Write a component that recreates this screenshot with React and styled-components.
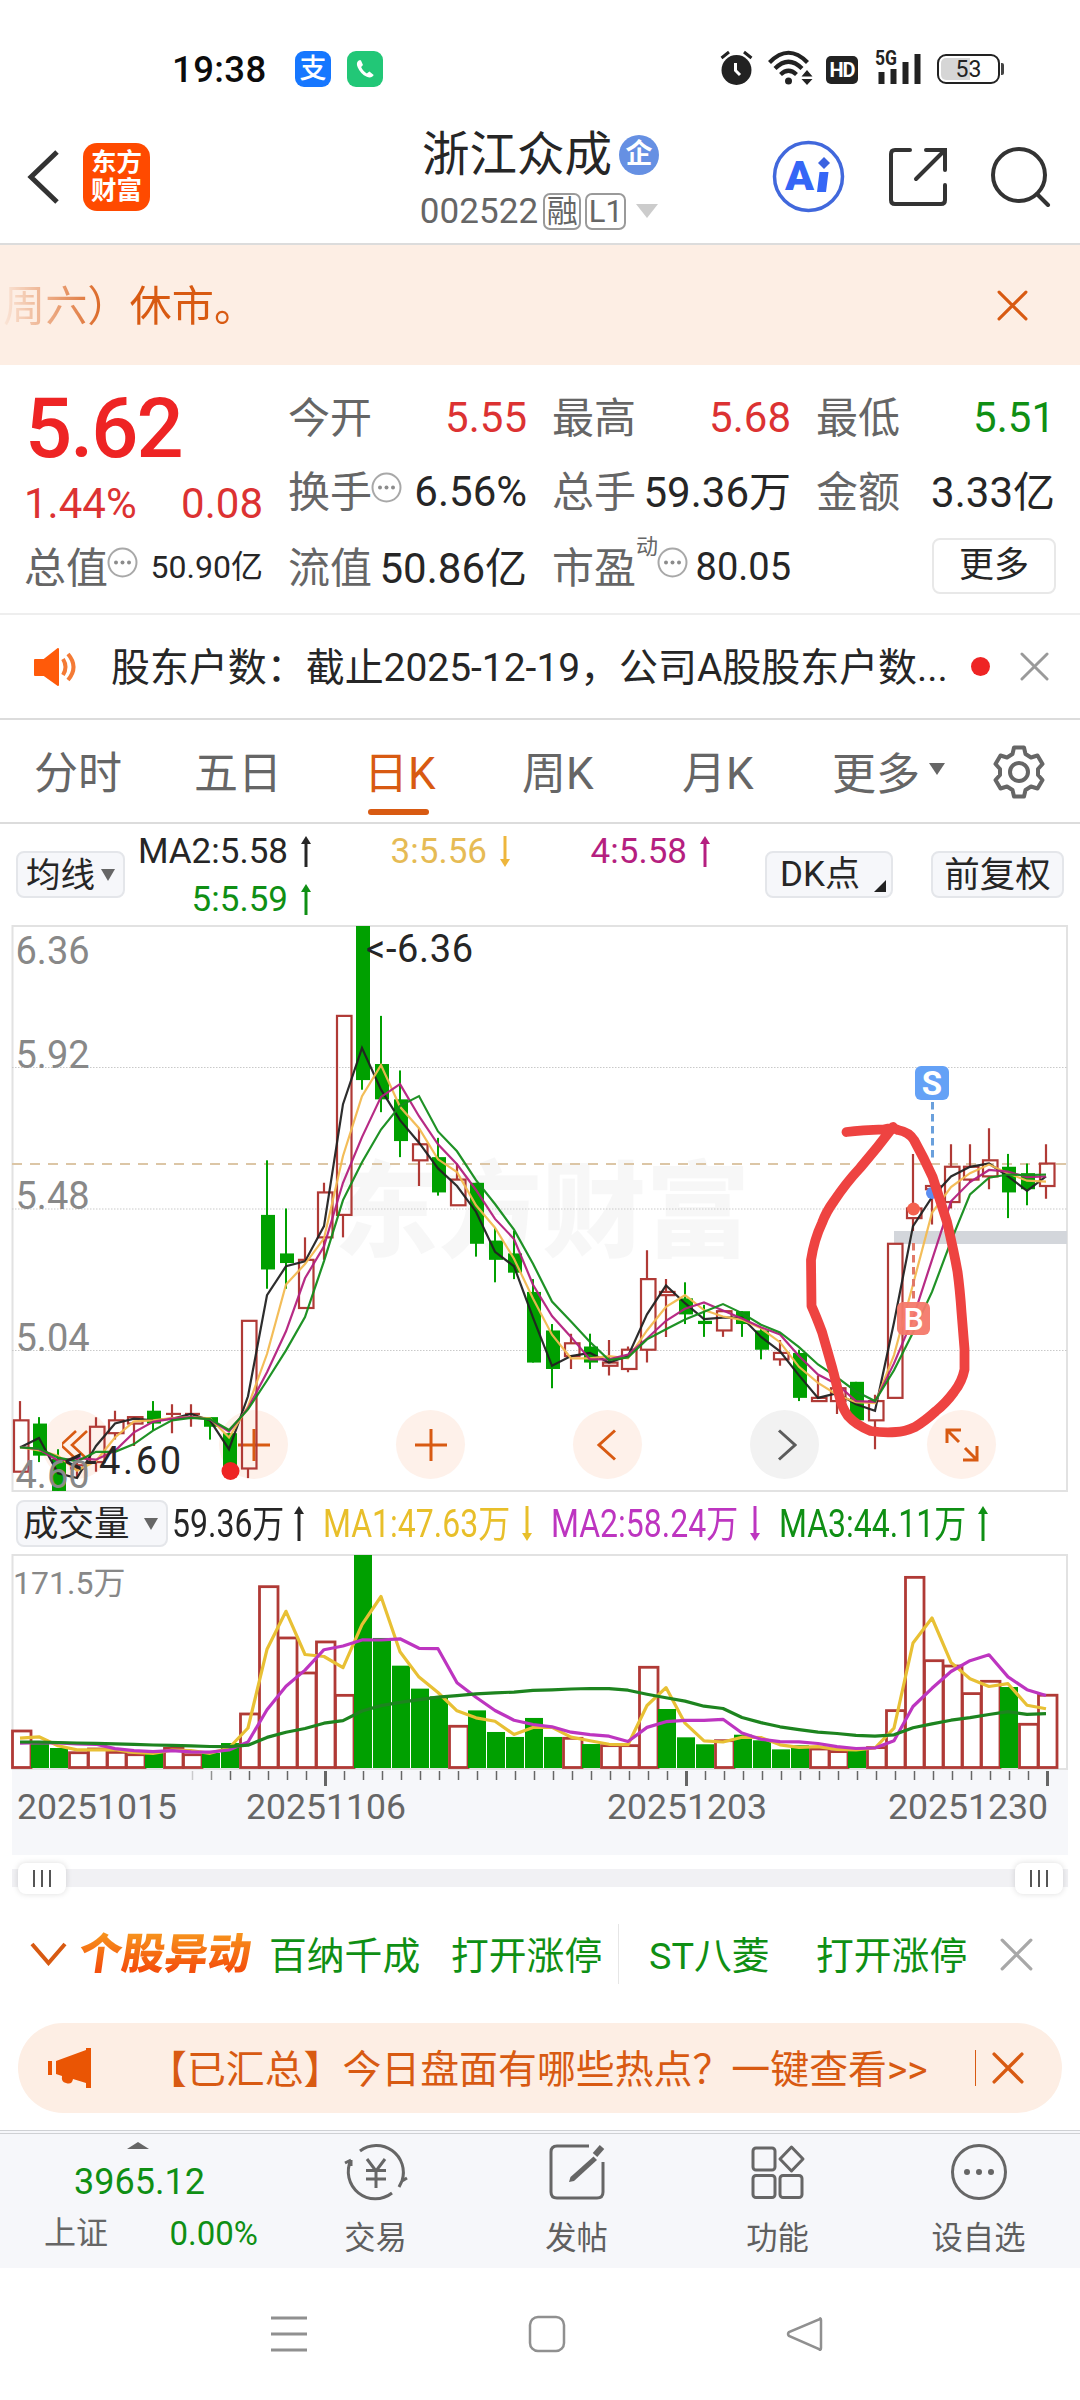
import React from "react";
import styled, { createGlobalStyle } from "styled-components";

const C = {
  ink: "#262626",
  grey: "#666666",
  soft: "#888888",
  red: "#ee2424",
  redText: "#dc3232",
  green: "#0f8f14",
  candleGreen: "#00a000",
  candleRed: "#b03a36",
  orange: "#d85a12",
  peach: "#fdeee4",
  panel: "#f6f7fa",
  line: "#dcdcdc",
};

const sans = '"Roboto", "Noto Sans CJK SC", sans-serif';

const Global = createGlobalStyle`
  * { box-sizing: border-box; }
  html, body { margin: 0; padding: 0; background: #fff; }
  body { font-family: ${sans}; color: ${C.ink}; width: 1080px; }
  svg { display: block; flex: none; }
`;

const Screen = styled.div`
  width: 1080px;
  height: 2400px;
  background: #fff;
  overflow: hidden;
  display: flex;
  flex-direction: column;
`;

/* ---------- status bar ---------- */
const StatusBar = styled.div`
  height: 110px;
  padding: 28px 76px 0 172px;
  display: flex;
  align-items: flex-start;
`;
const Clock = styled.div`
  width: 123px;
  line-height: 84px;
  height: 84px;
  font-size: 36.5px;
  font-weight: 500;
  letter-spacing: 0.4px;
  color: #0c0c0c;
`;
const AppBadge = styled.div`
  width: 36px;
  height: 36px;
  margin: 23px 16px 0 0;
  border-radius: 9px;
  background: ${(p) => p.$bg};
  color: #fff;
  font-size: 27px;
  font-weight: 500;
  line-height: 36px;
  display: flex;
  align-items: center;
  justify-content: center;
`;
const StatusIcons = styled.div`
  margin-left: auto;
  height: 36px;
  margin-top: 22px;
  display: flex;
  align-items: center;
`;
const HdBadge = styled.div`
  width: 32px;
  height: 28px;
  margin: 3px 16px 0 13px;
  border-radius: 5px;
  background: #222;
  color: #fff;
  font-size: 20px;
  font-weight: 700;
  line-height: 29px;
  text-align: center;
  letter-spacing: -1px;
`;
const Battery = styled.div`
  width: 63px;
  height: 30px;
  margin: 2px 1px 0 15px;
  border: 2px solid #222;
  border-radius: 9px;
  padding: 2px;
  display: flex;
`;
const BatteryFill = styled.div`
  width: 55px;
  border-radius: 5px;
  background: linear-gradient(90deg, #d6d6d6 53%, #fff 53%);
  font-size: 23px;
  line-height: 23px;
  text-align: center;
  color: #222;
`;
const BatteryNub = styled.div`
  width: 3px;
  height: 12px;
  margin-top: 2px;
  background: #444;
  border-radius: 0 2px 2px 0;
`;

/* ---------- header ---------- */
const Header = styled.header`
  height: 135px;
  border-bottom: 2px solid ${C.line};
  padding: 0 29px 0 27px;
  display: grid;
  grid-template-columns: 1fr auto 1fr;
`;
const HeaderLeft = styled.div`
  display: flex;
  align-items: center;
  gap: 23px;
`;
const BrandLogo = styled.div`
  width: 67px;
  height: 68px;
  border-radius: 14px;
  background: #ff4a00;
  color: #fff;
  font-size: 25.5px;
  font-weight: 700;
  line-height: 28px;
  padding-top: 5px;
  text-align: center;
`;
const TitleBlock = styled.div`
  padding-top: 17px;
  display: flex;
  flex-direction: column;
  align-items: center;
`;
const TitleLine = styled.div`
  display: flex;
  align-items: center;
  height: 56px;
  margin-left: 3px;
  font-size: 47.5px;
  line-height: 56px;
  gap: 7px;
`;
const VerifiedBadge = styled.span`
  width: 40px;
  height: 40px;
  border-radius: 50%;
  background: #6690e3;
  color: #fff;
  font-size: 27px;
  font-weight: 700;
  line-height: 38px;
  text-align: center;
`;
const CodeLine = styled.div`
  display: flex;
  align-items: center;
  height: 40px;
  margin-top: 8px;
  font-size: 35px;
  letter-spacing: 0.1px;
  color: ${C.grey};
`;
const Tag = styled.span`
  height: 37px;
  width: ${(p) => p.$w}px;
  margin-left: ${(p) => p.$gap}px;
  border: 2px solid #9a9a9a;
  border-radius: 7px;
  font-size: 31px;
  line-height: 33px;
  text-align: center;
`;
const Caret = styled.span`
  width: 0;
  height: 0;
  flex: none;
  margin: ${(p) => p.$margin || 0};
  border-left: ${(p) => p.$w / 2}px solid transparent;
  border-right: ${(p) => p.$w / 2}px solid transparent;
  border-${(p) => (p.$up ? "bottom" : "top")}: ${(p) => p.$h}px solid ${(p) => p.$color};
`;
const HeaderRight = styled.div`
  display: flex;
  justify-content: flex-end;
  align-items: center;
  gap: 44px;
`;

/* ---------- notice ---------- */
const Notice = styled.div`
  height: 120px;
  background: ${C.peach};
  color: ${C.orange};
  padding: 0 52px 0 3px;
  display: flex;
  align-items: center;
  justify-content: space-between;
  font-size: 42.2px;
`;
const FadingText = styled.span`
  margin-top: -6px;
  background: linear-gradient(90deg, rgba(216, 90, 18, 0.05) 0, ${C.orange} 110px);
  -webkit-background-clip: text;
  background-clip: text;
  color: transparent;
`;

/* ---------- quote ---------- */
const QuoteGrid = styled.section`
  height: 250px;
  padding: 15px 25px 0 24px;
  border-bottom: 2px solid #eeeeee;
  display: grid;
  grid-template-columns: repeat(4, 1fr);
  grid-template-rows: 74px 74px 77px;
  column-gap: 25px;
`;
const PriceCell = styled.div`
  grid-row: span 2;
  color: ${C.red};
`;
const LastPrice = styled.div`
  font-size: 83px;
  font-weight: 500;
  line-height: 98px;
  letter-spacing: -2px;
  padding-left: 1px;
`;
const ChangeLine = styled.div`
  display: flex;
  justify-content: space-between;
  font-size: 42px;
  line-height: 52px;
  color: ${C.redText};
`;
const QuoteCell = styled.div`
  display: flex;
  align-items: center;
  justify-content: space-between;
  font-size: 42px;
  white-space: nowrap;
  color: ${(p) => p.$color || C.ink};
`;
const QuoteLabel = styled.span`
  color: ${C.grey};
  display: flex;
  align-items: center;
  margin-top: -5px;
`;
const QuoteValue = styled.span`
  font-size: ${(p) => p.$size || 42}px;
  margin-top: ${(p) => (p.$raise ? -5 : 0)}px;
`;
const Superscript = styled.sup`
  font-size: 22px;
  line-height: 26px;
  align-self: flex-start;
`;
const MoreButton = styled.button`
  width: 124px;
  height: 56px;
  margin: -2px -1px 0 auto;
  padding: 0;
  background: #fff;
  border: 2px solid #e8e8e8;
  border-radius: 8px;
  font: 35px/50px ${sans};
  color: ${C.ink};
`;

/* ---------- news ---------- */
const NewsRow = styled.div`
  height: 105px;
  border-bottom: 2px solid ${C.line};
  padding: 0 31px 0 33px;
  display: flex;
  align-items: center;
  font-size: 38.95px;
`;
const NewsText = styled.div`
  margin: -5px 0 0 30px;
  flex: 1;
  white-space: nowrap;
`;
const RedDot = styled.span`
  width: 19px;
  height: 19px;
  border-radius: 50%;
  background: ${C.red};
  margin-right: 30px;
`;

/* ---------- tabs ---------- */
const Tabs = styled.nav`
  height: 104px;
  border-bottom: 2px solid ${C.line};
  padding: 0 34px 0 34px;
  display: flex;
  align-items: stretch;
  font-size: 44px;
  color: ${C.grey};
`;
const Tab = styled.div`
  width: ${(p) => p.$w}px;
  display: flex;
  flex-direction: column;
  line-height: 108px;
  text-indent: ${(p) => (p.$on ? -4 : 0)}px;
  color: ${(p) => (p.$on ? C.orange : C.grey)};
`;
const TabLine = styled.span`
  width: 61px;
  height: 6px;
  margin-top: -19px;
  border-radius: 3px;
  background: ${C.orange};
`;
const MoreTab = styled.div`
  display: flex;
  align-items: center;
  flex: 1;
`;

/* ---------- indicator row ---------- */
const IndicatorRow = styled.div`
  height: 101px;
  padding: 0 16px 0 16px;
  display: flex;
  align-items: center;
`;
const ChipButton = styled.button`
  width: ${(p) => p.$w}px;
  height: ${(p) => p.$h || 47}px;
  margin: 0 ${(p) => p.$mr || 0}px 0 0;
  padding: 0 ${(p) => p.$px || 0}px;
  flex: none;
  background: ${C.panel};
  border: 2px solid #e4e6ea;
  border-radius: 8px;
  display: flex;
  align-items: center;
  justify-content: ${(p) => (p.$center ? "center" : "space-between")};
  font: ${(p) => p.$size || 35}px/42px ${sans};
  color: ${C.ink};
`;
const MaGrid = styled.div`
  margin-left: 14px;
  flex: 1;
  display: grid;
  grid-template-columns: 174px 199px 200px;
  grid-auto-rows: 48px;
  margin-top: 1px;
`;
const MaItem = styled.div`
  display: flex;
  align-items: center;
  justify-content: flex-end;
  gap: 11px;
  font-size: 35px;
  white-space: nowrap;
  color: ${(p) => p.$color};
`;

/* ---------- charts ---------- */
const ChartArea = styled.div`
  position: relative;
  height: 568px;
`;
const ChartButtons = styled.div`
  position: absolute;
  left: 42px;
  top: 485px;
  display: flex;
  gap: 108px;
`;
const RoundButton = styled.div`
  width: 69px;
  height: 69px;
  border-radius: 50%;
  background: ${(p) => (p.$muted ? "#f2f2f2" : "#fef1ea")};
  display: flex;
  align-items: center;
  justify-content: center;
`;
const ChartLayer = styled.svg`
  position: relative;
`;
const VolumeHeader = styled.div`
  height: 61px;
  padding: 0 0 0 16px;
  display: flex;
  align-items: center;
`;
const VolumeItem = styled.div`
  width: ${(p) => p.$w}px;
  margin-left: ${(p) => p.$gap}px;
  display: flex;
  align-items: center;
  justify-content: space-between;
  color: ${(p) => p.$color};
`;
const Narrow = styled.span`
  width: ${(p) => p.$w}px;
  font-size: 38px;
  line-height: 50px;
  white-space: nowrap;
  transform: scaleX(0.842);
  transform-origin: 0 50%;
`;
const RangeBar = styled.div`
  height: 46px;
  margin: 0 12px;
  padding: 0 5px 0 6px;
  display: flex;
  align-items: center;
  justify-content: space-between;
  background: linear-gradient(#f1f1f4, #f1f1f4) 0 50% / 100% 18px no-repeat;
`;
const RangeHandle = styled.div`
  width: 48px;
  height: 31px;
  border-radius: 8px;
  background: #fff;
  box-shadow: 0 0 6px rgba(0, 0, 0, 0.14);
  display: flex;
  align-items: center;
  justify-content: center;
  gap: 6px;
`;
const Grip = styled.span`
  width: 2px;
  height: 17px;
  background: #555;
`;

/* ---------- movers ---------- */
const MoversRow = styled.div`
  height: 60px;
  margin-top: 23px;
  padding: 0 46px 0 30px;
  display: flex;
  align-items: center;
  font-size: 37.8px;
  color: ${C.green};
  white-space: nowrap;
`;
const MoversTitle = styled.span`
  width: 178px;
  margin: 0 12px 0 12px;
  font-size: 43px;
  font-weight: 900;
  line-height: 60px;
  transform: skewX(-8deg);
  background: linear-gradient(#f7941d 15%, #f4500c 75%);
  -webkit-background-clip: text;
  background-clip: text;
  color: transparent;
`;
const Mover = styled.span`
  width: ${(p) => p.$w}px;
  margin-top: -3px;
  flex: none;
`;
const MoverDivider = styled.span`
  width: 1px;
  height: 60px;
  margin-right: 30px;
  background: #e6e6e6;
`;

const HotPill = styled.div`
  height: 90px;
  margin: 39px 18px 0;
  padding: 0 38px 0 28px;
  border-radius: 45px;
  background: ${C.peach};
  color: ${C.orange};
  display: flex;
  align-items: center;
  font-size: 38.9px;
`;
const PillText = styled.div`
  margin: -5px 0 0 54px;
  flex: 1;
  white-space: nowrap;
`;
const PillDivider = styled.span`
  width: 1px;
  height: 36px;
  margin-right: 16px;
  background: ${C.orange};
`;

/* ---------- bottom ---------- */
const BottomBar = styled.div`
  height: 138px;
  margin-top: 17px;
  border-top: 4px double #cfd1d4;
  background: ${C.panel};
  display: flex;
`;
const IndexCell = styled.div`
  width: 276px;
  padding: 8px 18px 0 44px;
  display: flex;
  flex-direction: column;
  color: ${C.green};
`;
const IndexValue = styled.div`
  margin: 10px 0 0 30px;
  font-size: 36px;
  line-height: 46px;
`;
const IndexLine = styled.div`
  display: flex;
  justify-content: space-between;
  align-items: center;
  line-height: 44px;
  margin-top: 7px;
  font-size: 33px;
`;
const IndexName = styled.span`
  margin-top: -2px;
  font-size: 32px;
  color: ${C.grey};
`;
const NavItem = styled.div`
  width: 201px;
  padding-top: 8px;
  display: flex;
  flex-direction: column;
  align-items: center;
  font-size: 31.3px;
  line-height: 44px;
  gap: 15px;
  margin-left: -1px;
  margin-right: 1px;
  color: #5f5f5f;
`;
const SystemNav = styled.div`
  flex: 1;
  padding: 47px 257px 0 270px;
  display: flex;
  align-items: flex-start;
  justify-content: space-between;
`;

/* ---------- icons ---------- */
const Cross = ({ size = 30, color, w = 3 }) => (
  <svg width={size} height={size} viewBox="0 0 30 30" stroke={color} strokeWidth={w} strokeLinecap="round">
    <path d="M2 2L28 28M28 2L2 28" />
  </svg>
);
const ArrowIcon = styled.svg`
  transform: ${(p) => (p.$down ? "scaleY(-1)" : "none")};
`;
const Arrow = ({ down, color, h = 31 }) => (
  <ArrowIcon $down={down} width="14" height={h} viewBox={`0 0 14 ${h}`}>
    <path d={`M7 5V${h}`} stroke={color} strokeWidth="3" />
    <path d="M7 0L12 8H2Z" fill={color} />
  </ArrowIcon>
);
const InfoIcon = styled.svg`
  margin: -3px 0 0 -1px;
`;
const Info = () => (
  <InfoIcon width="31" height="31" viewBox="0 0 31 31">
    <circle cx="15.5" cy="15.5" r="14" fill="none" stroke="#a8a8a8" strokeWidth="2" />
    <g fill="#8c8c8c">
      <circle cx="9" cy="15.5" r="2" />
      <circle cx="15.5" cy="15.5" r="2" />
      <circle cx="22" cy="15.5" r="2" />
    </g>
  </InfoIcon>
);
const WifiIcon = styled.svg`
  margin-left: 15px;
`;
const DkLabel = styled.span`
  margin-left: 8px;
`;
const CornerMark = styled.svg`
  margin-top: 22px;
`;

/* ---------- data ---------- */
// open, close, high, low, volume (in 万)
const DAYS = [
  [4.66, 4.82, 4.88, 4.66, 30.6], [4.81, 4.71, 4.83, 4.69, 19.6], [4.70, 4.60, 4.73, 4.60, 16.1],
  [4.67, 4.68, 4.71, 4.64, 13.1], [4.69, 4.80, 4.83, 4.66, 16.1], [4.78, 4.82, 4.85, 4.76, 13.4],
  [4.81, 4.83, 4.83, 4.74, 11.5], [4.85, 4.81, 4.88, 4.79, 12.1], [4.84, 4.84, 4.87, 4.78, 16.6],
  [4.84, 4.84, 4.87, 4.80, 11.5], [4.83, 4.80, 4.83, 4.76, 12.1], [4.78, 4.66, 4.78, 4.65, 20.1],
  [4.67, 5.13, 5.13, 4.64, 44.3], [5.46, 5.29, 5.63, 5.23, 146.8], [5.34, 5.31, 5.48, 5.23, 105.5],
  [5.17, 5.32, 5.39, 5.17, 77.3], [5.39, 5.53, 5.56, 5.32, 102.3], [5.46, 6.08, 6.08, 5.39, 59.3],
  [6.36, 5.88, 6.36, 5.85, 171.5], [5.93, 5.82, 6.08, 5.78, 104.7], [5.82, 5.69, 5.91, 5.64, 82.4],
  [5.63, 5.68, 5.73, 5.55, 63.9], [5.64, 5.53, 5.70, 5.52, 57.7], [5.49, 5.57, 5.62, 5.49, 34.4],
  [5.56, 5.37, 5.56, 5.33, 46.4], [5.38, 5.32, 5.42, 5.25, 29.0], [5.34, 5.28, 5.41, 5.26, 25.0],
  [5.22, 5.00, 5.26, 5.00, 40.3], [5.10, 4.98, 5.12, 4.92, 25.0], [5.02, 5.06, 5.09, 4.98, 24.7],
  [5.05, 5.00, 5.09, 4.98, 19.3], [4.99, 5.00, 5.07, 4.96, 18.8], [4.98, 5.04, 5.05, 4.97, 18.8],
  [5.04, 5.26, 5.35, 5.00, 81.9], [5.21, 5.22, 5.26, 5.08, 47.5], [5.20, 5.15, 5.25, 5.12, 24.7],
  [5.13, 5.12, 5.18, 5.08, 19.1], [5.10, 5.16, 5.16, 5.08, 22.8], [5.16, 5.12, 5.16, 5.08, 26.8],
  [5.10, 5.04, 5.11, 5.01, 22.3], [5.01, 5.03, 5.07, 4.99, 15.0], [5.03, 4.89, 5.04, 4.88, 18.3],
  [4.88, 4.89, 4.96, 4.88, 16.1], [4.88, 4.92, 4.97, 4.84, 14.0], [4.94, 4.82, 4.94, 4.82, 15.0],
  [4.82, 4.88, 4.90, 4.73, 17.2], [4.89, 5.37, 5.37, 4.89, 47.0], [5.45, 5.48, 5.65, 5.41, 154.3],
  [5.54, 5.55, 5.55, 5.43, 87.2], [5.50, 5.61, 5.68, 5.48, 82.9], [5.57, 5.61, 5.68, 5.56, 60.7],
  [5.58, 5.63, 5.73, 5.54, 70.6], [5.61, 5.53, 5.65, 5.45, 65.2], [5.59, 5.54, 5.62, 5.49, 36.0],
  [5.55, 5.62, 5.68, 5.51, 59.4],
];
const PRIOR_CLOSES = [4.73, 4.74, 4.74, 4.65];
const PRIOR_VOLUMES = [...Array(15).fill(21.5), 17.4, 17.4, 17.4, 17.4, 17.4];

const px = (i) => 20 + 19 * i;
const py = (p) => 926 + (6.36 - p) * 321;
const vy = (v) => 1768 - v * 1.242;

const average = (series, prior, n) => {
  const all = [...prior, ...series];
  return series.map((_, i) => {
    const end = i + prior.length + 1;
    return all.slice(end - n, end).reduce((a, b) => a + b, 0) / n;
  });
};
const points = (values, y) => values.map((v, i) => `${px(i)},${y(v).toFixed(1)}`).join(" ");

const closes = DAYS.map((d) => d[1]);
const volumes = DAYS.map((d) => d[4]);

const Candle = ({ day, i }) => {
  const [open, close, high, low] = day;
  const x = px(i);
  const rising = close >= open;
  const top = py(Math.max(open, close));
  const bottom = py(Math.min(open, close));
  if (rising) {
    return (
      <g stroke={C.candleRed} strokeWidth="2.2" fill="none">
        <path d={`M${x} ${py(high)}V${top}M${x} ${bottom}V${py(low)}`} />
        {bottom - top < 1 ? (
          <path d={`M${x - 6} ${top}H${x + 9}`} />
        ) : (
          <rect x={x - 6} y={top} width="14.5" height={bottom - top} />
        )}
      </g>
    );
  }
  return (
    <g fill={C.candleGreen}>
      <rect x={x - 1} y={py(high)} width="2" height={py(low) - py(high)} />
      <rect x={x - 6} y={top} width="14" height={Math.max(bottom - top, 3)} />
    </g>
  );
};

const MA_LINES = [
  [2, "#222222"],
  [3, "#f2b950"],
  [4, "#b3207e"],
  [5, "#138c1a"],
];

const PriceChart = () => (
  <ChartLayer width="1080" height="568" viewBox="0 925 1080 568" fontFamily={sans}>
    <text x="334" y="1249" fontSize="104" fontWeight="900" fill="#000" opacity="0.028">东方财富</text>
    <path d="M12.5 926H1067V1491H12.5Z" fill="none" stroke="#e2e2e2" strokeWidth="2" />
    <path d="M12 1067.5H1067M12 1209H1067M12 1350.5H1067" stroke="#c9c9c9" strokeWidth="1" strokeDasharray="1.5 1.5" />
    <path d="M12 1164H1067" stroke="#dcc6a6" strokeWidth="1.8" strokeDasharray="10 8" />
    <rect x="894" y="1231" width="173" height="13" fill="#d3d6db" />
    {DAYS.map((day, i) => (
      <Candle key={i} day={day} i={i} />
    ))}
    {MA_LINES.map(([n, color]) => (
      <polyline
        key={n}
        points={points(average(closes, PRIOR_CLOSES, n), py)}
        fill="none"
        stroke={color}
        strokeWidth="2.2"
        strokeOpacity="0.95"
      />
    ))}
    <g fontSize="38" fill={C.ink}>
      <text x="366" y="962" textLength="107">&lt;-6.36</text>
      <text x="64" y="1474" textLength="117">&lt;-4.60</text>
    </g>
    <g fontSize="38" fill={C.soft}>
      <text x="15.5" y="964">6.36</text>
      <text x="15.5" y="1068">5.92</text>
      <text x="15.5" y="1209">5.48</text>
      <text x="15.5" y="1351">5.04</text>
      <text x="15.5" y="1488">4.60</text>
    </g>
    <circle cx="230.5" cy="1471" r="9" fill={C.red} />
    <g>
      <path d="M932.5 1102V1158" stroke="#6aa0dc" strokeWidth="3" strokeDasharray="7.5 4.5" />
      <circle cx="932" cy="1193" r="6" fill="#5b8df0" />
      <rect x="915" y="1066" width="34" height="34" rx="6" fill="#64a1f6" />
      <text x="932" y="1095" fontSize="33" fontWeight="700" fill="#fff" textAnchor="middle">S</text>
      <path d="M913.5 1243V1300" stroke="#e07868" strokeWidth="3" strokeDasharray="7.5 4.5" />
      <circle cx="913.5" cy="1209" r="6.5" fill="#f4614e" />
      <rect x="897" y="1302" width="33" height="33" rx="6" fill="#f4796a" opacity="0.95" />
      <text x="913.5" y="1330" fontSize="32" fontWeight="500" fill="#fff" textAnchor="middle">B</text>
    </g>
    <path
      d="M846.5 1132Q862 1130 884 1129.4Q893 1127 898 1130Q909 1132 914 1140Q924 1158 932.6 1177L947 1222Q954 1252 957.5 1271.5Q960 1290 961.5 1312L964.5 1349V1369.5Q962 1382 954 1392Q946 1403 936 1411Q925 1421 915 1427Q904 1432 896 1432Q884 1433 870.6 1431Q856 1425 848 1416Q842 1408 839 1395Q835 1378 832 1367L822 1332Q816 1316 811.5 1306L811 1260Q814 1240 822 1223Q826 1212 834 1201Q846 1183 860 1168Q878 1147 893 1127"
      fill="none"
      stroke="#ee4341"
      strokeWidth="9.8"
      strokeLinecap="round"
      strokeLinejoin="round"
    />
  </ChartLayer>
);

const VOLUME_LINES = [
  [2, "#e8c034"],
  [5, "#bd35c0"],
  [20, "#1d841f"],
];
const DATES = [
  [17, "20251015"],
  [246, "20251106"],
  [607, "20251203"],
  [888, "20251230"],
];

const VolumeChart = () => (
  <svg width="1080" height="301" viewBox="0 1554 1080 301" fontFamily={sans}>
    <rect x="12" y="1770" width="1056" height="85" fill={C.panel} />
    <path d="M12.5 1555H1067V1769H12.5Z" fill="none" stroke="#e2e2e2" strokeWidth="2" />
    <text x="13" y="1594" fontSize="32" fill={C.soft}>171.5万</text>
    {DAYS.map((day, i) => {
      const previous = i ? closes[i - 1] : 4.65;
      const top = vy(day[4]);
      return day[1] >= previous ? (
        <rect key={i} x={px(i) - 7.5} y={top + 1} width="18.5" height={1767.5 - top - 1} fill="#fff" stroke={C.candleRed} strokeWidth="2.8" />
      ) : (
        <rect key={i} x={px(i) - 8} y={top} width="18" height={1768 - top} fill={C.candleGreen} />
      );
    })}
    {VOLUME_LINES.map(([n, color]) => (
      <polyline
        key={n}
        points={points(average(volumes, PRIOR_VOLUMES, n), vy)}
        fill="none"
        stroke={color}
        strokeWidth="3.2"
        strokeLinejoin="round"
      />
    ))}
    {DAYS.map((_, i) => {
      if (i < 9) return null;
      const major = i === 16 || i === 35 || i === 54;
      return (
        <path
          key={i}
          d={`M${px(i) + 1.5} 1771V${major ? 1786 : 1780}`}
          stroke={C.grey}
          strokeWidth={major ? 3 : 1.5}
          opacity={i === 9 ? 0.3 : i === 10 ? 0.7 : 1}
        />
      );
    })}
    <g fontSize="35.6" fill={C.grey}>
      {DATES.map(([x, label]) => (
        <text key={label} x={x} y="1819">{label}</text>
      ))}
    </g>
  </svg>
);

const VOLUME_LEGEND = [
  { text: "59.36万", color: C.ink, w: 134, textW: 110, gap: 4 },
  { text: "MA1:47.63万", color: "#e8bf2a", w: 211, textW: 184, gap: 17, down: true },
  { text: "MA2:58.24万", color: "#bd35c0", w: 211, textW: 184, gap: 17, down: true },
  { text: "MA3:44.11万", color: C.green, w: 211, textW: 184, gap: 17 },
];

export default function App() {
  return (
    <>
      <Global />
      <Screen>
        <StatusBar>
          <Clock>19:38</Clock>
          <AppBadge $bg="#1677ff">支</AppBadge>
          <AppBadge $bg="#22c777">
            <svg width="22" height="22" viewBox="0 0 24 24">
              <path d="M5.5 2.5C3 4 2.500 6.500 4 10C6 14.800 9.500 18.500 14 20.500C17.500 22 20.200 21 21.500 18.500L16.800 14.800L14 16.800C11.500 15.500 9 12.600 7.800 9.800L9.800 7.500L7.500 2.500Z" fill="#fff" />
            </svg>
          </AppBadge>
          <StatusIcons>
            <svg width="33" height="36" viewBox="0 0 33 36">
              <circle cx="16.500" cy="20" r="15" fill="#222" />
              <path d="M1.500 8L9 2M31.500 8L24 2" stroke="#222" strokeWidth="3" />
              <path d="M15.500 13V20.500L20 25" stroke="#fff" strokeWidth="3" fill="none" />
            </svg>
            <WifiIcon width="45" height="36" viewBox="0 0 45 36">
              <g fill="none" stroke="#222" strokeWidth="4.200">
                <path d="M1.500 12.500Q20.500 -7 39.500 12.500" />
                <path d="M7 18.500Q20.500 5 34 18.500" />
                <path d="M12.500 24.500Q20.500 17 28.500 24.500" />
              </g>
              <circle cx="20.500" cy="31" r="3.500" fill="#222" />
              <path d="M39 20L44.500 26.500H33.500ZM39 35L33.500 29H44.500Z" fill="#222" />
            </WifiIcon>
            <HdBadge>HD</HdBadge>
            <svg width="48" height="46" viewBox="0 0 48 46">
              <text x="1" y="20" fontFamily="Roboto, sans-serif" fontSize="20" fontWeight="700" fill="#222" textLength="22" lengthAdjust="spacingAndGlyphs">5G</text>
              <path d="M7.500 27V39M19.500 24V39M31.500 17V39M43.500 9V39" stroke="#222" strokeWidth="6" />
            </svg>
            <Battery><BatteryFill>53</BatteryFill></Battery>
            <BatteryNub />
          </StatusIcons>
        </StatusBar>

        <Header>
          <HeaderLeft>
            <svg width="33" height="56" viewBox="0 0 33 56">
              <path d="M30 3L4 28L30 53" fill="none" stroke="#333" strokeWidth="5" />
            </svg>
            <BrandLogo>东方<br />财富</BrandLogo>
          </HeaderLeft>
          <TitleBlock>
            <TitleLine>浙江众成<VerifiedBadge>企</VerifiedBadge></TitleLine>
            <CodeLine>
              002522
              <Tag $w={38} $gap={5}>融</Tag>
              <Tag $w={41} $gap={4}>L1</Tag>
              <Caret $w={23} $h={14} $color="#cccccc" $margin="0 0 0 10px" />
            </CodeLine>
          </TitleBlock>
          <HeaderRight>
            <svg width="73" height="73" viewBox="0 0 73 73">
              <circle cx="36.500" cy="36.500" r="34" fill="#fff" stroke="#4168dc" strokeWidth="3.500" />
              <text x="13" y="50" fontFamily="Roboto, sans-serif" fontSize="41" fontWeight="900" fill="#3566f6" textLength="29" lengthAdjust="spacingAndGlyphs">A</text>
              <path d="M47.500 32H56.500L54 52H45Z" fill="#3566f6" />
              <path d="M52 17L58 23L52 29L46 23Z" fill="#3b62e0" />
            </svg>
            <svg width="58" height="58" viewBox="0 0 58 58" fill="none" stroke="#333" strokeWidth="4" strokeLinecap="round">
              <path d="M21 2H6Q2 2 2 6V52Q2 56 6 56H52Q56 56 56 52V37" />
              <path d="M37 2H56V22M55 3L27 31" />
            </svg>
            <svg width="60" height="60" viewBox="0 0 60 60" fill="none" stroke="#333" strokeWidth="4" strokeLinecap="round">
              <circle cx="28" cy="28" r="26" />
              <path d="M46 47L57 58" />
            </svg>
          </HeaderRight>
        </Header>

        <Notice>
          <FadingText>周六）休市。</FadingText>
          <Cross color={C.orange} size={31} w={3} />
        </Notice>

        <QuoteGrid>
          <PriceCell>
            <LastPrice>5.62</LastPrice>
            <ChangeLine><span>1.44%</span><span>0.08</span></ChangeLine>
          </PriceCell>
          <QuoteCell $color={C.redText}><QuoteLabel>今开</QuoteLabel><QuoteValue>5.55</QuoteValue></QuoteCell>
          <QuoteCell $color={C.redText}><QuoteLabel>最高</QuoteLabel><QuoteValue>5.68</QuoteValue></QuoteCell>
          <QuoteCell $color={C.green}><QuoteLabel>最低</QuoteLabel><QuoteValue>5.51</QuoteValue></QuoteCell>
          <QuoteCell><QuoteLabel>换手<Info /></QuoteLabel><QuoteValue>6.56%</QuoteValue></QuoteCell>
          <QuoteCell><QuoteLabel>总手</QuoteLabel><QuoteValue $raise>59.36万</QuoteValue></QuoteCell>
          <QuoteCell><QuoteLabel>金额</QuoteLabel><QuoteValue $raise>3.33亿</QuoteValue></QuoteCell>
          <QuoteCell><QuoteLabel>总值<Info /></QuoteLabel><QuoteValue $size={32} $raise>50.90亿</QuoteValue></QuoteCell>
          <QuoteCell><QuoteLabel>流值</QuoteLabel><QuoteValue $raise>50.86亿</QuoteValue></QuoteCell>
          <QuoteCell>
            <QuoteLabel>市盈<Superscript>动</Superscript><Info /></QuoteLabel>
            <QuoteValue $size={38}>80.05</QuoteValue>
          </QuoteCell>
          <QuoteCell><MoreButton>更多</MoreButton></QuoteCell>
        </QuoteGrid>

        <NewsRow>
          <svg width="48" height="38" viewBox="0 0 48 38">
            <path d="M2 12H11L25 1V37L11 27H2Z" fill="#ff5a0a" stroke="#ff5a0a" strokeWidth="2" strokeLinejoin="round" />
            <path d="M30 11Q35 19 30 27M35 6Q46 19 35 32" fill="none" stroke="#f47a35" strokeWidth="4" />
          </svg>
          <NewsText>股东户数：截止2025-12-19，公司A股股东户数...</NewsText>
          <RedDot />
          <Cross color="#9a9a9a" size={29} w={3} />
        </NewsRow>

        <Tabs>
          <Tab $w={160}>分时</Tab>
          <Tab $w={174}>五日</Tab>
          <Tab $w={154} $on>日K<TabLine /></Tab>
          <Tab $w={160}>周K</Tab>
          <Tab $w={150}>月K</Tab>
          <MoreTab>更多<Caret $w={16} $h={12} $color={C.grey} $margin="-4px 0 0 9px" /></MoreTab>
          <svg width="54" height="104" viewBox="0 0 54 104" fill="none" stroke={C.grey} strokeWidth="4" strokeLinejoin="round">
            <path d="M20.500 34L22 27.500H32L33.500 34L39 37.500L45.500 35.500L50.500 44L46 49V55L50.500 60L45.500 68.500L39 66.500L33.500 70L32 76.500H22L20.500 70L15 66.500L8.500 68.500L3.500 60L8 55V49L3.500 44L8.500 35.500L15 37.500Z" />
            <circle cx="27" cy="52" r="9" />
          </svg>
        </Tabs>

        <IndicatorRow>
          <ChipButton $w={109} $px={8} $size={34.5}>均线<Caret $w={14} $h={12} $color={C.grey} /></ChipButton>
          <MaGrid>
            <MaItem $color={C.ink}>MA2:5.58<Arrow color={C.ink} /></MaItem>
            <MaItem $color="#e6bb55">3:5.56<Arrow down color="#eeb63c" /></MaItem>
            <MaItem $color="#b51f80">4:5.58<Arrow color="#b51f80" /></MaItem>
            <MaItem $color={C.green}>5:5.59<Arrow color={C.green} /></MaItem>
          </MaGrid>
          <ChipButton $w={128} $px={5} $mr={38} $size={35}>
            <DkLabel>DK点</DkLabel>
            <CornerMark width="12" height="12" viewBox="0 0 12 12"><path d="M12 0V12H0Z" fill="#222" /></CornerMark>
          </ChipButton>
          <ChipButton $w={133} $center $size={35.5}>前复权</ChipButton>
        </IndicatorRow>

        <ChartArea>
          <ChartButtons>
            <RoundButton>
              <svg width="30" height="30" viewBox="0 0 30 30" fill="none" stroke={C.orange} strokeWidth="2.600"><path d="M14 1L-1 15L14 29M25 1L10 15L25 29" /></svg>
            </RoundButton>
            <RoundButton>
              <svg width="34" height="34" viewBox="0 0 34 34" stroke={C.orange} strokeWidth="3"><path d="M1 17H33M17 1V33" /></svg>
            </RoundButton>
            <RoundButton>
              <svg width="34" height="34" viewBox="0 0 34 34" stroke={C.orange} strokeWidth="3"><path d="M1 17H33M17 1V33" /></svg>
            </RoundButton>
            <RoundButton>
              <svg width="24" height="32" viewBox="0 0 24 32" fill="none" stroke={C.orange} strokeWidth="3"><path d="M19 1.500L3 16L19 30.500" /></svg>
            </RoundButton>
            <RoundButton $muted>
              <svg width="24" height="32" viewBox="0 0 24 32" fill="none" stroke="#5c5c5c" strokeWidth="3"><path d="M6 1.500L22 16L6 30.500" /></svg>
            </RoundButton>
            <RoundButton>
              <svg width="34" height="34" viewBox="0 0 34 34" fill="none" stroke={C.orange} strokeWidth="3"><path d="M16 2H2V15M2 2L14 14M18 32H32V18M32 32L20 20" /></svg>
            </RoundButton>
          </ChartButtons>
          <PriceChart />
        </ChartArea>

        <VolumeHeader>
          <ChipButton $w={152} $px={5} $size={35.5}>成交量<Caret $w={14} $h={12} $color={C.grey} $margin="0 3px 0 0" /></ChipButton>
          {VOLUME_LEGEND.map((item) => (
            <VolumeItem key={item.text} $w={item.w} $gap={item.gap} $color={item.color}>
              <Narrow $w={item.textW}>{item.text}</Narrow>
              <Arrow color={item.color} down={item.down} h={35} />
            </VolumeItem>
          ))}
        </VolumeHeader>
        <VolumeChart />

        <RangeBar>
          <RangeHandle><Grip /><Grip /><Grip /></RangeHandle>
          <RangeHandle><Grip /><Grip /><Grip /></RangeHandle>
        </RangeBar>

        <MoversRow>
          <svg width="37" height="24" viewBox="0 0 37 24"><path d="M2 2L18.500 21L35 2" fill="none" stroke={C.orange} strokeWidth="4" /></svg>
          <MoversTitle>个股异动</MoversTitle>
          <Mover $w={182}>百纳千成</Mover>
          <Mover $w={167}>打开涨停</Mover>
          <MoverDivider />
          <Mover $w={167}>ST八菱</Mover>
          <Mover $w={184}>打开涨停</Mover>
          <Cross color="#a8a8a8" size={33} w={3} />
        </MoversRow>

        <HotPill>
          <svg width="48" height="42" viewBox="0 0 48 42" fill="#ea5504">
            <path d="M2 14H6V28H2ZM10 14L40 3V1H45V41H40V36L27 32Q26 38 20 36Q15 35 16 29L10 27Z" />
          </svg>
          <PillText>【已汇总】今日盘面有哪些热点？一键查看&gt;&gt;</PillText>
          <PillDivider />
          <Cross color={C.orange} size={32} w={3.2} />
        </HotPill>

        <BottomBar>
          <IndexCell>
            <Caret $up $w={22} $h={7} $color={C.grey} $margin="0 0 0 83px" />
            <IndexValue>3965.12</IndexValue>
            <IndexLine><IndexName>上证</IndexName><span>0.00%</span></IndexLine>
          </IndexCell>
          <NavItem>
            <svg width="66" height="60" viewBox="0 0 66 60" fill="none" stroke="#666" strokeWidth="3">
              <path d="M17 9A27 27 0 0 1 59 39L56 45M59 39L64 36M49 51A27 27 0 0 1 8 18M8 18L2 21M8 18V24" />
              <path d="M24 17L33 29L42 17M33 29V46M23 28.500H43M23 37H43" />
            </svg>
            交易
          </NavItem>
          <NavItem>
            <svg width="60" height="60" viewBox="0 0 60 60" fill="none" stroke="#666" strokeWidth="3">
              <path d="M42 4H10Q4 4 4 10V50Q4 56 10 56H50Q56 56 56 50V20" />
              <path d="M48 13L55 5" strokeWidth="6" />
              <path d="M46.500 14.500L50 18L27 39L22 40L23.500 35Z" fill="#666" stroke="none" />
            </svg>
            发帖
          </NavItem>
          <NavItem>
            <svg width="56" height="60" viewBox="0 0 56 60" fill="none" stroke="#666" strokeWidth="3">
              <rect x="3" y="6" width="22" height="22" rx="3" />
              <rect x="3" y="33.500" width="22" height="22" rx="3" />
              <rect x="30" y="33.500" width="22" height="22" rx="3" />
              <path d="M41.500 5L53 17L41.500 29L30 17Z" strokeLinejoin="round" />
            </svg>
            功能
          </NavItem>
          <NavItem>
            <svg width="60" height="60" viewBox="0 0 60 60">
              <circle cx="30" cy="30" r="26.500" fill="none" stroke="#666" strokeWidth="3" />
              <g fill="#666"><circle cx="18" cy="30" r="3" /><circle cx="30" cy="30" r="3" /><circle cx="42" cy="30" r="3" /></g>
            </svg>
            设自选
          </NavItem>
        </BottomBar>

        <SystemNav>
          <svg width="38" height="38" viewBox="0 0 38 38" stroke="#909090" strokeWidth="3"><path d="M1 3H37M1 19H37M1 35H37" /></svg>
          <svg width="38" height="38" viewBox="0 0 38 38"><rect x="2" y="2" width="34" height="34" rx="8" fill="none" stroke="#909090" strokeWidth="2.500" /></svg>
          <svg width="38" height="38" viewBox="0 0 38 38"><path d="M34 4.500Q36 2 36 5V33Q36 36 34 34L4 21Q2 19 4 17Z" fill="none" stroke="#909090" strokeWidth="2.500" /></svg>
        </SystemNav>
      </Screen>
    </>
  );
}
